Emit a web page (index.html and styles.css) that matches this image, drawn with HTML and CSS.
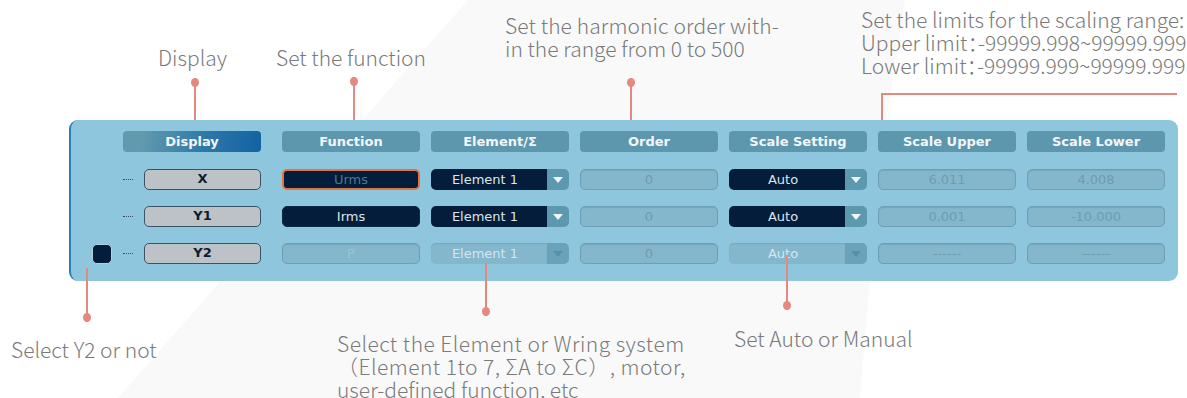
FILE: index.html
```html
<html>
<head>
<title>Graph setting - Display, Function, Element</title>
<link rel="stylesheet" href="styles.css">
</head>
<body>

<div class="figure">
  <svg class="backdrop" width="1187" height="398" viewBox="0 0 1187 398">
    <polygon points="468,0 905,0 880,160 860,398 118,398" fill="#f9f9fa"/>
  </svg>

  <div class="panel">
    <div class="grid">
      <div></div>
      <div class="head head-display">Display</div>
      <div class="head">Function</div>
      <div class="head">Element/&Sigma;</div>
      <div class="head">Order</div>
      <div class="head">Scale Setting</div>
      <div class="head">Scale Upper</div>
      <div class="head">Scale Lower</div>

      <div></div>
      <div class="disp"><span class="dots"></span><span class="disp-btn">X</span></div>
      <div class="field dark focus">Urms</div>
      <div class="combo"><span class="combo-val">Element 1</span><span class="combo-arrow"></span></div>
      <div class="field off">0</div>
      <div class="combo"><span class="combo-val">Auto</span><span class="combo-arrow"></span></div>
      <div class="field off">6.011</div>
      <div class="field off">4.008</div>

      <div></div>
      <div class="disp"><span class="dots"></span><span class="disp-btn">Y1</span></div>
      <div class="field dark">Irms</div>
      <div class="combo"><span class="combo-val">Element 1</span><span class="combo-arrow"></span></div>
      <div class="field off">0</div>
      <div class="combo"><span class="combo-val">Auto</span><span class="combo-arrow"></span></div>
      <div class="field off">0.001</div>
      <div class="field off">-10.000</div>

      <div class="check-cell"><span class="check"></span></div>
      <div class="disp"><span class="dots"></span><span class="disp-btn">Y2</span></div>
      <div class="field off faint">P</div>
      <div class="combo off"><span class="combo-val">Element 1</span><span class="combo-arrow"></span></div>
      <div class="field off">0</div>
      <div class="combo off"><span class="combo-val">Auto</span><span class="combo-arrow"></span></div>
      <div class="field off">------</div>
      <div class="field off">------</div>
    </div>
  </div>

  <!-- callouts -->
  <div class="note" style="left:158px; top:46px">Display</div>
  <div class="note" style="left:276px; top:46px">Set the function</div>
  <div class="note" style="left:505px; top:14px"><span class="wide">Set the harmonic order with-</span><br>in the range from 0 to 500</div>
  <div class="note" style="left:861px; top:8px">Set the limits for the scaling range:<br>Upper limit<span class="colon">：</span>-99999.998~99999.999<br>Lower limit<span class="colon">：</span>-99999.999~99999.999</div>
  <div class="note" style="left:11px; top:338px">Select Y2 or not</div>
  <div class="note" style="left:337px; top:332px"><span class="spaced">Select the Element or Wring system</span><br><span class="spaced">（Element 1to 7, ΣA to ΣC）, motor,</span><br>user-defined function, etc</div>
  <div class="note" style="left:734px; top:327px">Set Auto or Manual</div>

  <div class="pin pin-up" style="left:194px; top:78px; height:42px"></div>
  <div class="pin pin-up" style="left:353px; top:77px; height:43px"></div>
  <div class="pin pin-up" style="left:630px; top:78px; height:42px"></div>
  <div class="bracket"></div>
  <div class="pin pin-down" style="left:86px; top:268px; height:54px"></div>
  <div class="pin pin-down" style="left:485px; top:263px; height:53px"></div>
  <div class="pin pin-down" style="left:786px; top:255px; height:55px"></div>
</div>

</body>
</html>
```

FILE: styles.css
```css
body {
  margin:0;
  background:#fff;
  font-family:"DejaVu Sans", sans-serif;
}

.figure {
  position:relative;
  width:1187px;
  height:398px;
  overflow:hidden;
}

.backdrop {
  position:absolute;
  left:0;
  top:0;
}

.panel {
  position:relative;
  margin:120px 0 0 69px;
  width:1109px;
  height:161px;
  box-sizing:border-box;
  background:#8ec6dd;
  border-left:2px solid #2a80b2;
  border-radius:9px;
  padding:11px 13px 0 21px;
}

.grid {
  display:grid;
  grid-template-columns:20px 148px repeat(6, 138px);
  grid-template-rows:22px 21px 21px 21px;
  column-gap:11px;
  row-gap:16px;
}

.head {
  align-self:start;
  height:21px;
  background:#5d97ad;
  color:#f2f6f8;
  font-weight:bold;
  font-size:13px;
  line-height:21px;
  text-align:center;
  border-radius:4px;
}

.head-display {
  width:138px;
  background:linear-gradient(100deg, #6199ae 15%, #2d77a8 60%, #1262a2 100%);
}

.disp {
  display:flex;
  align-items:center;
  gap:11px;
  width:138px;
}

.dots {
  width:10px;
  border-top:1px dotted #36505f;
}

.disp-btn {
  flex:1;
  height:21px;
  box-sizing:border-box;
  background:#bcc2c5;
  border:1.5px solid #3b5368;
  border-radius:5px;
  color:#0b1d2e;
  font-weight:bold;
  font-size:13px;
  line-height:18px;
  text-align:center;
}

.field {
  height:21px;
  box-sizing:border-box;
  border-radius:5px;
  font-size:13px;
  line-height:19px;
  text-align:center;
}

.field.dark {
  background:#031d3a;
  border:1px solid #0d2844;
  color:#dbe6ec;
}

.field.dark.focus {
  border:2px solid #e0763f;
  color:#4c7891;
  line-height:17px;
}

.field.off {
  background:#84b7cc;
  border:1px solid #6e9fb5;
  box-shadow:inset 0 1px 1px rgba(40, 80, 100, 0.15);
  color:#6c9cb2;
}

.field.faint {
  color:#9dc4d5;
}

.combo {
  display:flex;
  height:21px;
  font-size:13px;
  line-height:21px;
}

.combo-val {
  flex:1;
  background:#031d3a;
  color:#dbe6ec;
  border-radius:5px 0 0 5px;
  text-align:center;
  padding-right:8px;
}

.combo-arrow {
  width:22px;
  background:#5c98ae;
  border-radius:0 5px 5px 0;
  position:relative;
}

.combo-arrow::after {
  content:"";
  position:absolute;
  left:6px;
  top:8px;
  border-left:5px solid transparent;
  border-right:5px solid transparent;
  border-top:6px solid #f2f4f5;
}

.combo.off .combo-val {
  background:#84b7cc;
  color:#d4e6ee;
  box-shadow:inset 0 1px 1px rgba(40, 80, 100, 0.15);
}

.combo.off .combo-arrow {
  background:#6aa3b9;
}

.combo.off .combo-arrow::after {
  border-top-color:#5590a9;
}

.check-cell {
  display:flex;
  align-items:center;
}

.check {
  width:20px;
  height:20px;
  box-sizing:border-box;
  background:#041d3b;
  border:1px solid #b4d2df;
  border-radius:5px;
}

.note {
  position:absolute;
  font-family:"Noto Sans CJK SC", "Noto Sans", sans-serif;
  font-weight:300;
  font-size:21px;
  line-height:23px;
  color:#7a7a7a;
  white-space:nowrap;
}

.wide {
  letter-spacing:0.1px;
}

.spaced {
  letter-spacing:0.45px;
}

.colon {
  font-feature-settings:"halt";
}

.pin {
  position:absolute;
  width:2px;
  background:#e3897f;
  z-index:2;
}

.pin::after {
  content:"";
  position:absolute;
  left:-3px;
  width:8px;
  height:9px;
  border-radius:50%;
  background:#e3897f;
}

.pin-up::after {
  top:0;
}

.pin-down::after {
  bottom:0;
}

.bracket {
  position:absolute;
  left:881px;
  top:93px;
  width:296px;
  height:27px;
  border-top:2px solid #e3897f;
  border-left:2px solid #e3897f;
  box-sizing:border-box;
}
```
